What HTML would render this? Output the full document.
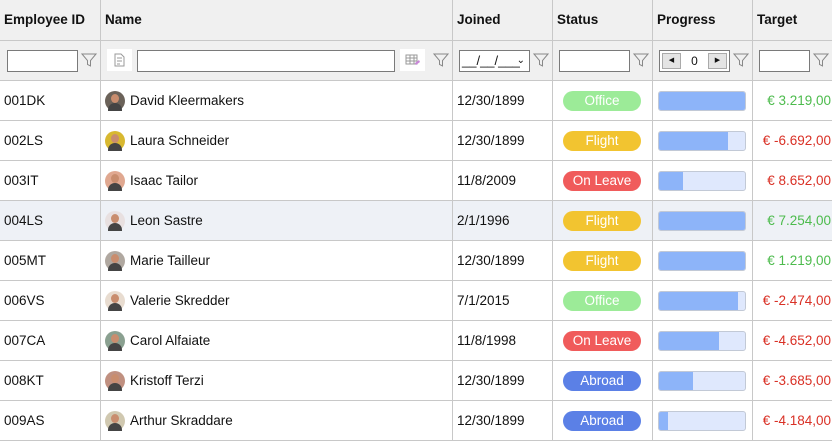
<!DOCTYPE html>
<html><head><meta charset="utf-8"><style>
*{box-sizing:border-box;margin:0;padding:0}
body{width:832px;height:440px;overflow:hidden;background:#fff;font-family:"Segoe UI","Liberation Sans",sans-serif;font-size:13.5px;color:#111;position:relative}
.c{position:absolute;border-right:1px solid #c8c8c8;border-bottom:1px solid #c8c8c8;overflow:hidden;white-space:nowrap}
.h{background:#f0f0f0;font-weight:bold;padding:12px 4px;font-size:13.5px}
.f{background:#f0f0f0}
.inp{position:absolute;background:#fff;border:1px solid #7a7a7a;height:22px;top:9px}
.fil{position:absolute;top:11px;width:16px;height:16px}
.t{line-height:40px;padding-left:4px}
.pill{position:absolute;left:10px;top:10px;width:78px;height:20px;border-radius:10px;color:#fff;text-align:center;line-height:20px;font-size:13.5px}
.bar{position:absolute;left:5px;top:10px;width:88px;height:20px;border-radius:3px;background:#dfe8fd;border:1px solid #c2c9d6;overflow:hidden}
.bar i{display:block;height:100%;background:#8db4f9}
.av{position:absolute;left:4px;top:10px;width:20px;height:20px;border-radius:50%}
.tg{text-align:right;padding-right:1px;line-height:40px}
</style></head><body>
<div class="c h" style="left:0;top:0;width:101px;height:41px">Employee ID</div>
<div class="c h" style="left:101px;top:0;width:352px;height:41px">Name</div>
<div class="c h" style="left:453px;top:0;width:100px;height:41px">Joined</div>
<div class="c h" style="left:553px;top:0;width:100px;height:41px">Status</div>
<div class="c h" style="left:653px;top:0;width:100px;height:41px">Progress</div>
<div class="c h" style="left:753px;top:0;width:80px;height:41px">Target</div>
<svg width="0" height="0" style="position:absolute"><defs><symbol id="fl" viewBox="0 0 16 16"><path d="M1 2h14L9.5 8.5V14L6.5 12.5V8.5Z" fill="none" stroke="#888" stroke-width="1"/></symbol></defs></svg>
<div class="c f" style="left:0;top:41px;width:101px;height:40px"><div class="inp" style="left:7px;width:71px"></div><svg class="fil" style="left:81px"><use href="#fl"/></svg></div>
<div class="c f" style="left:101px;top:41px;width:352px;height:40px">
<div style="position:absolute;left:6px;top:8px;width:25px;height:22px;background:#fff"><svg width="25" height="22"><path d="M8 5h6l3 3v9H8z M10 9h5 M10 12h5 M10 15h3" fill="none" stroke="#999"/></svg></div>
<div class="inp" style="left:36px;width:258px"></div>
<div style="position:absolute;left:299px;top:8px;width:25px;height:22px;background:#fff"><svg width="25" height="22"><path d="M6 6h11v9H6z M6 9h11 M6 12h11 M10 6v9 M14 6v9" fill="none" stroke="#999"/><path d="M15 14l4-3 1 2-4 3z" fill="#c987d8"/></svg></div>
<svg class="fil" style="left:332px"><use href="#fl"/></svg></div>
<div class="c f" style="left:453px;top:41px;width:100px;height:40px"><div class="inp" style="left:6px;width:71px;font-size:13px;line-height:20px;padding-left:2px">__/__/___ <span style="position:absolute;right:4px;font-size:10px">&#8964;</span></div><svg class="fil" style="left:80px"><use href="#fl"/></svg></div>
<div class="c f" style="left:553px;top:41px;width:100px;height:40px"><div class="inp" style="left:6px;width:71px"></div><svg class="fil" style="left:80px"><use href="#fl"/></svg></div>
<div class="c f" style="left:653px;top:41px;width:100px;height:40px"><div class="inp" style="left:6px;width:71px;text-align:center;font-size:12px;line-height:20px">0
<div style="position:absolute;left:2px;top:2px;width:19px;height:16px;background:#e4e4e4;border:1px solid #aaa;font-size:7px;line-height:14px">&#9664;</div>
<div style="position:absolute;right:2px;top:2px;width:19px;height:16px;background:#e4e4e4;border:1px solid #aaa;font-size:7px;line-height:14px">&#9654;</div></div><svg class="fil" style="left:80px"><use href="#fl"/></svg></div>
<div class="c f" style="left:753px;top:41px;width:80px;height:40px"><div class="inp" style="left:6px;width:51px"></div><svg class="fil" style="left:60px"><use href="#fl"/></svg></div>
<div id="rows"></div>
<script>
var d=[["001DK","David Kleermakers","12/30/1899","Office",100,"€ 3.219,00",1,"#6b6259"],
["002LS","Laura Schneider","12/30/1899","Flight",80,"€ -6.692,00",0,"#d8b830"],
["003IT","Isaac Tailor","11/8/2009","On Leave",28,"€ 8.652,00",0,"#e0a890"],
["004LS","Leon Sastre","2/1/1996","Flight",100,"€ 7.254,00",1,"#e8e0e0"],
["005MT","Marie Tailleur","12/30/1899","Flight",100,"€ 1.219,00",1,"#b0a8a0"],
["006VS","Valerie Skredder","7/1/2015","Office",92,"€ -2.474,00",0,"#e8dcd0"],
["007CA","Carol Alfaiate","11/8/1998","On Leave",70,"€ -4.652,00",0,"#8aa090"],
["008KT","Kristoff Terzi","12/30/1899","Abroad",40,"€ -3.685,00",0,"#c09080"],
["009AS","Arthur Skraddare","12/30/1899","Abroad",10,"€ -4.184,00",0,"#d0c8b0"]];
var col={"Office":"#9ceb98","Flight":"#f2c430","On Leave":"#f05b5b","Abroad":"#5b80e6"};
var h="";
d.forEach(function(r,i){var y=81+i*40,bg=i==3?"#eef1f6":"#fff";
var s='background:'+bg+';top:'+y+'px;height:40px;';
h+='<div class="c t" style="'+s+'left:0;width:101px">'+r[0]+'</div>';
h+='<div class="c t" style="'+s+'left:101px;width:352px;padding-left:29px"><div class="av" style="background:'+r[7]+'"><div style="position:absolute;left:6px;top:3px;width:8px;height:9px;border-radius:50%;background:#c98d6e"></div><div style="position:absolute;left:3px;top:12px;width:14px;height:8px;border-radius:7px 7px 0 0;background:#444"></div></div>'+r[1]+'</div>';
h+='<div class="c t" style="'+s+'left:453px;width:100px">'+r[2]+'</div>';
h+='<div class="c" style="'+s+'left:553px;width:100px"><div class="pill" style="background:'+col[r[3]]+'">'+r[3]+'</div></div>';
h+='<div class="c" style="'+s+'left:653px;width:100px"><div class="bar"><i style="width:'+r[4]+'%"></i></div></div>';
h+='<div class="c tg" style="'+s+'left:753px;width:80px;color:'+(r[6]?"#4cbb4c":"#d93025")+'">'+r[5]+'</div>';});
document.getElementById("rows").innerHTML=h;
</script>
</body></html>
